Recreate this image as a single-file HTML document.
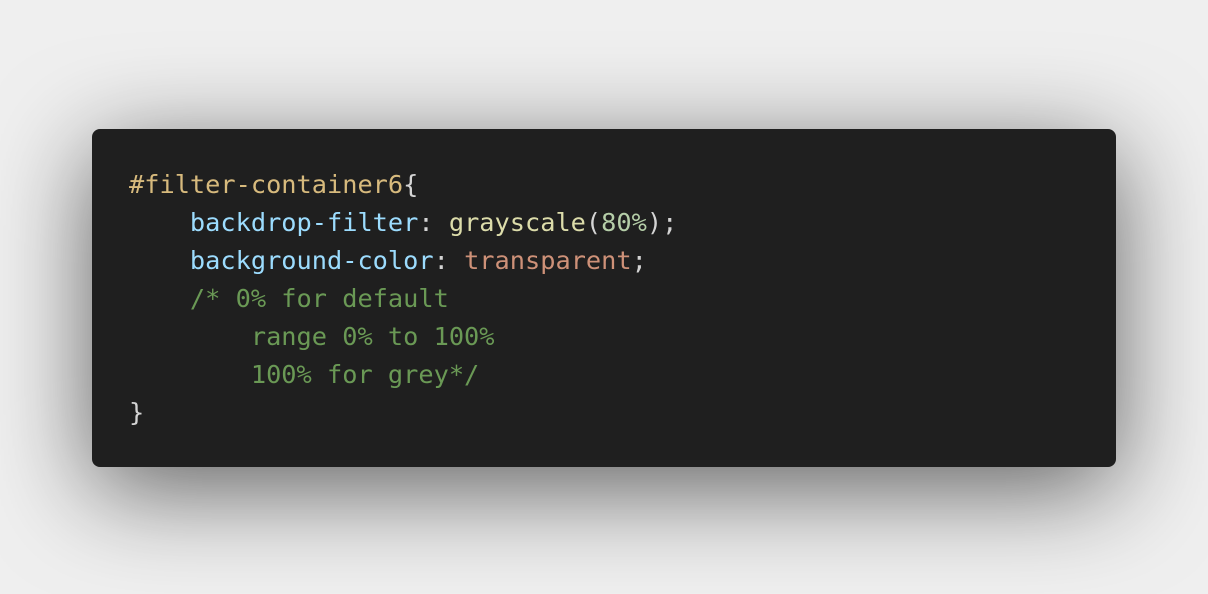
<!DOCTYPE html>
<html><head><style>
html,body{margin:0;padding:0;}
body{width:1208px;height:594px;background:#efefef;position:relative;overflow:hidden;}
.box{position:absolute;left:92px;top:129px;width:1024px;height:338px;background:#1f1f1f;border-radius:8px;box-shadow:0 22px 100px rgba(0,0,0,0.6);}
pre{margin:0;position:absolute;left:129px;top:166px;font-family:"DejaVu Sans Mono",monospace;font-size:25.3px;line-height:38px;color:#d4d4d4;}
.s{color:#d7ba7d}.p{color:#9cdcfe}.f{color:#dcdcaa}.n{color:#b5cea8}.v{color:#ce9178}.c{color:#6a9955}
</style></head><body>
<div class="box"></div>
<pre><span class="s">#filter-container6</span>{
    <span class="p">backdrop-filter</span>: <span class="f">grayscale</span>(<span class="n">80%</span>);
    <span class="p">background-color</span>: <span class="v">transparent</span>;
    <span class="c">/* 0% for default
        range 0% to 100%
        100% for grey*/</span>
}</pre>
</body></html>
